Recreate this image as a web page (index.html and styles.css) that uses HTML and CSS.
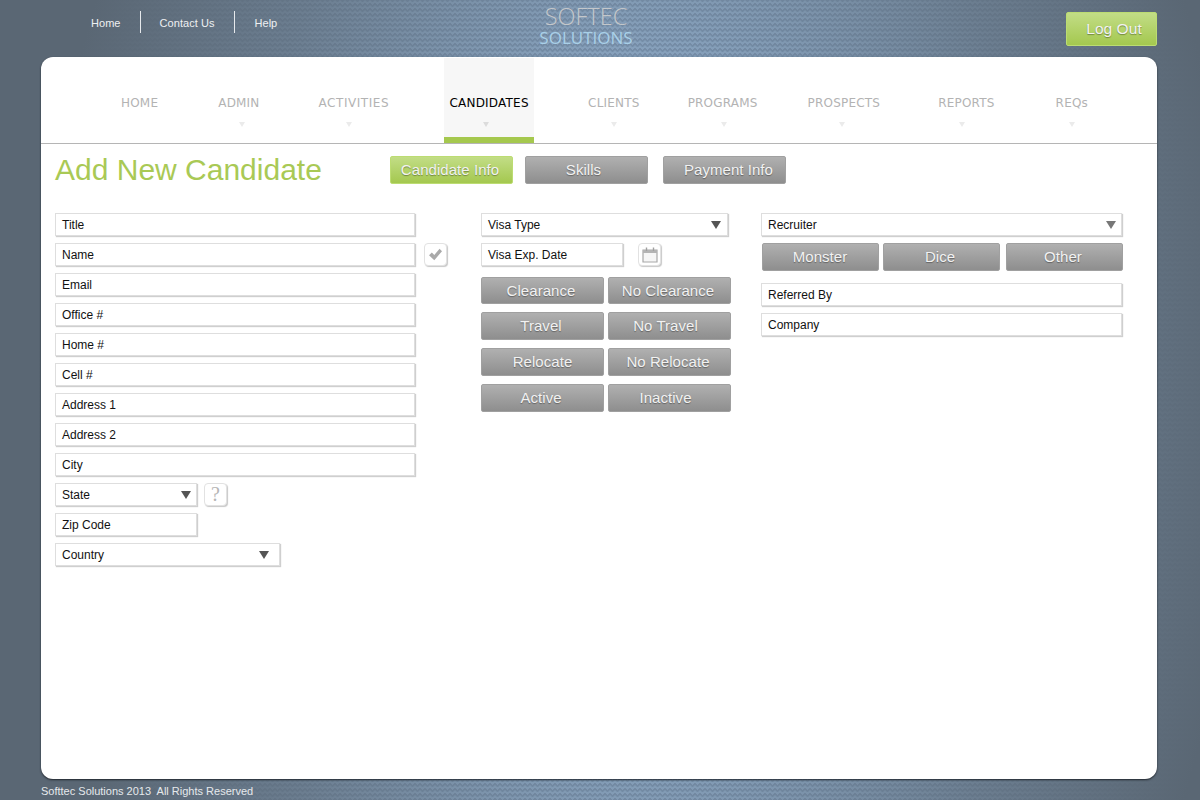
FILE: index.html
```html
<!DOCTYPE html>
<html lang="en">
<head>
<meta charset="utf-8">
<title>Add New Candidate</title>
<link rel="stylesheet" href="styles.css">
</head>
<body>
<header class="top">
  <nav class="toplinks">
    <a class="toplink first">Home</a>
    <a class="toplink">Contact Us</a>
    <a class="toplink">Help</a>
  </nav>
  <div class="logo"><span class="logo-a">SOFTEC</span><span class="logo-b">SOLUTIONS</span></div>
  <a class="btn logout">Log Out</a>
</header>
<main class="card">
  <nav class="mainnav">
    <a class="item i1">HOME</a>
    <a class="item i2">ADMIN<i class="arrow a2"></i></a>
    <a class="item i3">ACTIVITIES<i class="arrow a3"></i></a>
    <a class="item i4 current">CANDIDATES<i class="arrow a4"></i></a>
    <a class="item i5">CLIENTS<i class="arrow"></i></a>
    <a class="item i6">PROGRAMS<i class="arrow a6"></i></a>
    <a class="item i7">PROSPECTS<i class="arrow a7"></i></a>
    <a class="item i8">REPORTS<i class="arrow a8"></i></a>
    <a class="item i9">REQs<i class="arrow"></i></a>
  </nav>
  <div class="titlebar">
    <h1 class="title">Add New Candidate</h1>
    <div class="tabs">
      <a class="btn green tab">Candidate Info</a>
      <a class="btn tab t2">Skills</a>
      <a class="btn tab t3">Payment Info</a>
    </div>
  </div>
  <form class="form">
    <div class="col left">
      <div class="field wide">Title</div>
      <div class="row">
        <div class="field wide">Name</div>
        <span class="iconbtn check"><svg width="15" height="13" viewBox="0 0 18 16"><path d="M1 9 L4.5 5.5 L7.5 8.5 L14 1 L17 4 L7.5 15 Z" fill="#a9a9a9"/></svg></span>
      </div>
      <div class="field wide">Email</div>
      <div class="field wide">Office #</div>
      <div class="field wide">Home #</div>
      <div class="field wide">Cell #</div>
      <div class="field wide">Address 1</div>
      <div class="field wide">Address 2</div>
      <div class="field wide">City</div>
      <div class="row">
        <div class="field short select">State<i class="caret"></i></div>
        <span class="iconbtn help">?</span>
      </div>
      <div class="field short">Zip Code</div>
      <div class="field country select">Country<i class="caret"></i></div>
    </div>
    <div class="col middle">
      <div class="field visa select">Visa Type<i class="caret"></i></div>
      <div class="row date">
        <div class="field short">Visa Exp. Date</div>
        <span class="iconbtn cal"><svg width="16" height="16" viewBox="0 0 16 16"><path d="M1 3 H15 V15 H1 Z" fill="#f6f6f6" stroke="#a8a8a8" stroke-width="1.2"/><path d="M1 3 H15 V6 H1 Z" fill="#b4b4b4"/><path d="M4.5 0.5 V4 M11.5 0.5 V4" stroke="#a0a0a0" stroke-width="1.4"/></svg></span>
      </div>
      <div class="btngrid">
        <a class="btn">Clearance</a><a class="btn">No Clearance</a>
        <a class="btn">Travel</a><a class="btn shift">No Travel</a>
        <a class="btn reloc">Relocate</a><a class="btn">No Relocate</a>
        <a class="btn">Active</a><a class="btn shift">Inactive</a>
      </div>
    </div>
    <div class="col right">
      <div class="field full select">Recruiter<i class="caret light"></i></div>
      <div class="sources">
        <a class="btn">Monster</a><a class="btn">Dice</a><a class="btn">Other</a>
      </div>
      <div class="field full">Referred By</div>
      <div class="field full">Company</div>
    </div>
  </form>
</main>
<footer class="foot">Softtec Solutions 2013&nbsp; All Rights Reserved</footer>
</body>
</html>
```
FILE: styles.css
```css
* { box-sizing: border-box; }
html, body { height: 100%; }
body {
  margin: 0;
  height: 800px;
  overflow: hidden;
  font-family: "Liberation Sans", Arial, sans-serif;
  background-color: #86a0bb;
  background-image:
    radial-gradient(ellipse 640px 1000px at 640px 400px, rgba(90,103,116,0) 35%, rgba(90,103,116,.6) 65%, rgba(90,103,116,1) 94%),
    linear-gradient(135deg, rgba(40,55,75,.18) 25%, transparent 25%),
    linear-gradient(225deg, rgba(40,55,75,.18) 25%, transparent 25%),
    linear-gradient(315deg, rgba(40,55,75,.18) 25%, transparent 25%),
    linear-gradient(45deg, rgba(40,55,75,.18) 25%, transparent 25%);
  background-size: auto, 5px 5px, 5px 5px, 5px 5px, 5px 5px;
  background-position: 0 0, -2.5px 0, -2.5px 0, 0 0, 0 0;
}

.top {
  height: 57px;
  display: flex;
  align-items: flex-start;
  position: relative;
}
.toplinks {
  display: flex;
  margin: 11px 0 0 72px;
}
.toplink {
  height: 22px;
  line-height: 25px;
  padding: 0 20px 0 19px;
  font-size: 11px;
  letter-spacing: .05px;
  color: #eef0f2;
  border-left: 1px solid #e6e9ec;
}
.toplink.first { border-left: 0; padding-right: 19px; }
.logo {
  position: absolute;
  left: 486px;
  top: 3px;
  width: 200px;
  display: flex;
  flex-direction: column;
  align-items: center;
  font-family: "Open Sans", sans-serif;
}
.logo-a { font-size: 23.5px; line-height: 27px; color: #c4c7ca; font-weight: 300; }
.logo-b { font-size: 17px; line-height: 16px; color: #a9d0e8; }

.btn {
  display: flex;
  align-items: center;
  justify-content: center;
  height: 100%;
  padding: 0 3px 2px 0;
  border: 1px solid #a0a0a0;
  border-radius: 2px;
  background: linear-gradient(#b0b0b0, #8e8e8e);
  color: #f2f2f2;
  font-size: 15px;
  letter-spacing: .05px;
  text-shadow: 0 1px 1px rgba(0,0,0,.35);
}
.btn.green, .logout {
  border-color: #bcdc72;
  background: linear-gradient(#c2dd86, #a4c84f);
}
.logout {
  position: absolute;
  left: 1066px;
  top: 12px;
  width: 91px;
  height: 34px;
  font-size: 15.5px;
  padding: 0 0 0 5px;
}

.card {
  margin-left: 41px;
  width: 1116px;
  height: 722px;
  background: #fff;
  border-radius: 12px;
  box-shadow: 0 1px 2px rgba(20,25,30,.85);
}
.mainnav {
  display: flex;
  height: 87px;
  border-bottom: 1px solid #b5b5b5;
  padding-top: 1px;
}
.item {
  display: flex;
  flex-direction: column;
  align-items: center;
  height: 85px;
  padding: 37px 5px 0;
  font-family: "DejaVu Sans", sans-serif;
  font-size: 12px;
  letter-spacing: .2px;
  line-height: 16px;
  color: #b3b3b3;
}
.item.current {
  width: 90px;
  background: #f7f7f7;
  border-bottom: 6px solid #a5c84e;
  color: #000;
}
.i1 { margin-left: 75px; }
.i2 { margin-left: 50px; }
.i3 { margin-left: 49px; letter-spacing: .55px; }
.i4 { margin-left: 50px; }
.i5 { margin-left: 49px; }
.i6 { margin-left: 38px; }
.i7 { margin-left: 40px; }
.i8 { margin-left: 48px; }
.i9 { margin-left: 51px; }
.arrow {
  margin-top: 11px;
  width: 0;
  height: 0;
  border-left: 3.5px solid transparent;
  border-right: 3.5px solid transparent;
  border-top: 5px solid #ebebeb;
}
.current .arrow { border-top-color: #dcdcdc; }
.a2 { margin-left: 7px; }
.a3 { margin-left: -9px; }
.a4 { margin-left: -6px; }
.a6 { margin-left: 2px; }
.a7 { margin-left: -3px; }
.a8 { margin-left: -9px; }

.titlebar {
  display: flex;
  align-items: center;
  height: 52px;
  padding: 0 0 0 14px;
}
.title {
  margin: 0;
  width: 335px;
  font-size: 30px;
  font-weight: 400;
  color: #a9c955;
}
.tabs { display: flex; gap: 12px; height: 28px; }
.tab { width: 123px; }
.t2 { padding-right: 6px; }
.t3 { margin-left: 3px; padding: 0 0 2px 8px; }

.form {
  display: flex;
  padding: 17px 0 0 14px;
}
.col { display: flex; flex-direction: column; gap: 7px; }
.left { width: 426px; }
.middle { width: 280px; }
.right { width: 362px; }
.row { display: flex; align-items: flex-start; }
.field {
  position: relative;
  height: 23px;
  padding: 0 6px;
  border: 1px solid #dedede;
  box-shadow: 1px 1px 1px #cfcfcf;
  background: #fff;
  font-size: 12px;
  line-height: 23px;
  color: #111;
}
.wide { width: 360px; }
.short { width: 142px; }
.country { width: 225px; }
.visa { width: 247px; }
.full { width: 361px; }
.caret {
  position: absolute;
  right: 5.5px;
  top: 7px;
  border-left: 5px solid transparent;
  border-right: 5px solid transparent;
  border-top: 8px solid #555;
}
.country .caret { right: 10.5px; }
.visa .caret { right: 6.5px; }
.caret.light { border-top-color: #777; }
.iconbtn {
  display: flex;
  align-items: center;
  justify-content: center;
  width: 23px;
  height: 23px;
  border: 1px solid #e2e2e2;
  border-radius: 4px;
  box-shadow: 1px 1px 1px #c8c8c8;
  background: #fff;
}
.check { margin-left: 9px; }
.help {
  margin-left: 7px;
  font-family: "Liberation Serif", serif;
  font-size: 20px;
  color: #b5b5b5;
}
.cal { margin-left: 15px; }
.btngrid {
  display: grid;
  grid-template-columns: 123px 123px;
  grid-template-rows: 27px 28px 28px 28px;
  column-gap: 4px;
  row-gap: 8px;
  margin-top: 4px;
}
.btngrid .btn:nth-child(-n+2) { padding-bottom: 0; }
.btngrid .shift { padding-right: 8px; }
.btngrid .reloc { padding-right: 0; }
.sources {
  display: flex;
  gap: 4px;
  height: 28px;
  margin: 0 0 5px 1px;
}
.sources .btn { width: 117px; }
.sources .btn:first-child { padding-right: 1px; }
.sources .btn:last-child { margin-left: 2px; }

.foot {
  margin: 5px 0 0 41px;
  font-size: 11px;
  line-height: 14px;
  color: #e6e9ec;
}
```
